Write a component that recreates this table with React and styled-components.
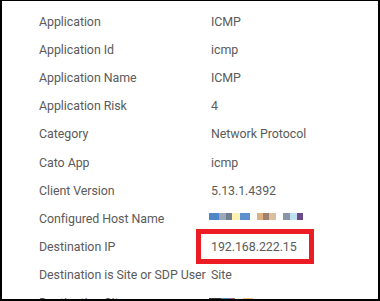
import styled, { createGlobalStyle } from "styled-components";

const Global = createGlobalStyle`
  html, body { margin: 0; padding: 0; background: #fff; }
  body { font-family: Roboto, "Liberation Sans", sans-serif; }
`;

const rows = [
  { label: "Application", value: "ICMP" },
  { label: "Application Id", value: "icmp" },
  { label: "Application Name", value: "ICMP" },
  { label: "Application Risk", value: "4" },
  { label: "Category", value: "Network Protocol" },
  { label: "Cato App", value: "icmp" },
  { label: "Client Version", value: "5.13.1.4392" },
  {
    label: "Configured Host Name",
    blur: [
      ["#4f86c6", 10], ["#9aa8b8", 7], ["#6f7f8f", 6], ["#fff3b0", 8], ["#5a8fd0", 10], ["#fff", 7],
      ["#e0b080", 6], ["#a08070", 6], ["#d8c0a0", 7], ["#fff", 7],
      ["#8a96a6", 7], ["#bfe0f0", 7], ["#6a4a8a", 6],
    ],
  },
  { label: "Destination IP", value: "192.168.222.15", highlight: true },
  { label: "Destination is Site or SDP User", value: "Site" },
  {
    label: "Destination Site",
    last: true,
    blur: [["#3a3a3a", 12], ["#4f86c6", 8], ["#9a6a6a", 6], ["#fff", 8], ["#f0c080", 10]],
  },
];

const Frame = styled.div`
  box-sizing: border-box;
  width: 380px;
  height: 301px;
  border: 2px solid #000;
  border-top-width: 1px;
  margin-bottom: 1px;
  overflow: hidden;
  padding: 6px 0 0 37px;
`;

const Table = styled.div`
  display: grid;
  grid-template-columns: 172px 1fr;
  grid-auto-rows: 28.2px;
  align-items: center;
  font-size: 12.4px;
  letter-spacing: -0.05px;
  color: #5b5b5b;
`;

const Label = styled.div`
  white-space: nowrap;
`;

const Value = styled.div`
  white-space: nowrap;
  display: flex;
  align-items: center;
`;

const Highlight = styled.span`
  display: inline-block;
  border: 5px solid #ec1c24;
  padding: 5px 12px 5px 10px;
  margin: -10px 0 -10px -15px;
  line-height: 15px;
`;

const Blur = styled.span`
  display: inline-flex;
  align-items: center;
  height: ${(p) => (p.$last ? 4 : 7)}px;
  margin-left: -2px;
  margin-top: ${(p) => (p.$last ? -6 : -3)}px;
  filter: blur(0.4px);
`;

const Chip = styled.span`
  display: inline-block;
  height: 100%;
  background: ${(p) => p.$c};
`;

export default function App() {
  return (
    <>
      <Global />
      <Frame>
        <Table>
          {rows.map((r, i) => (
            <div key={i} style={{ display: "contents" }}>
              <Label>{r.label}</Label>
              <Value>
                {r.blur ? (
                  <Blur $last={r.last}>
                    {r.blur.map(([c, w], j) => (
                      <Chip key={j} $c={c} style={{ width: w }} />
                    ))}
                  </Blur>
                ) : r.highlight ? (
                  <Highlight>{r.value}</Highlight>
                ) : (
                  r.value
                )}
              </Value>
            </div>
          ))}
        </Table>
      </Frame>
    </>
  );
}
